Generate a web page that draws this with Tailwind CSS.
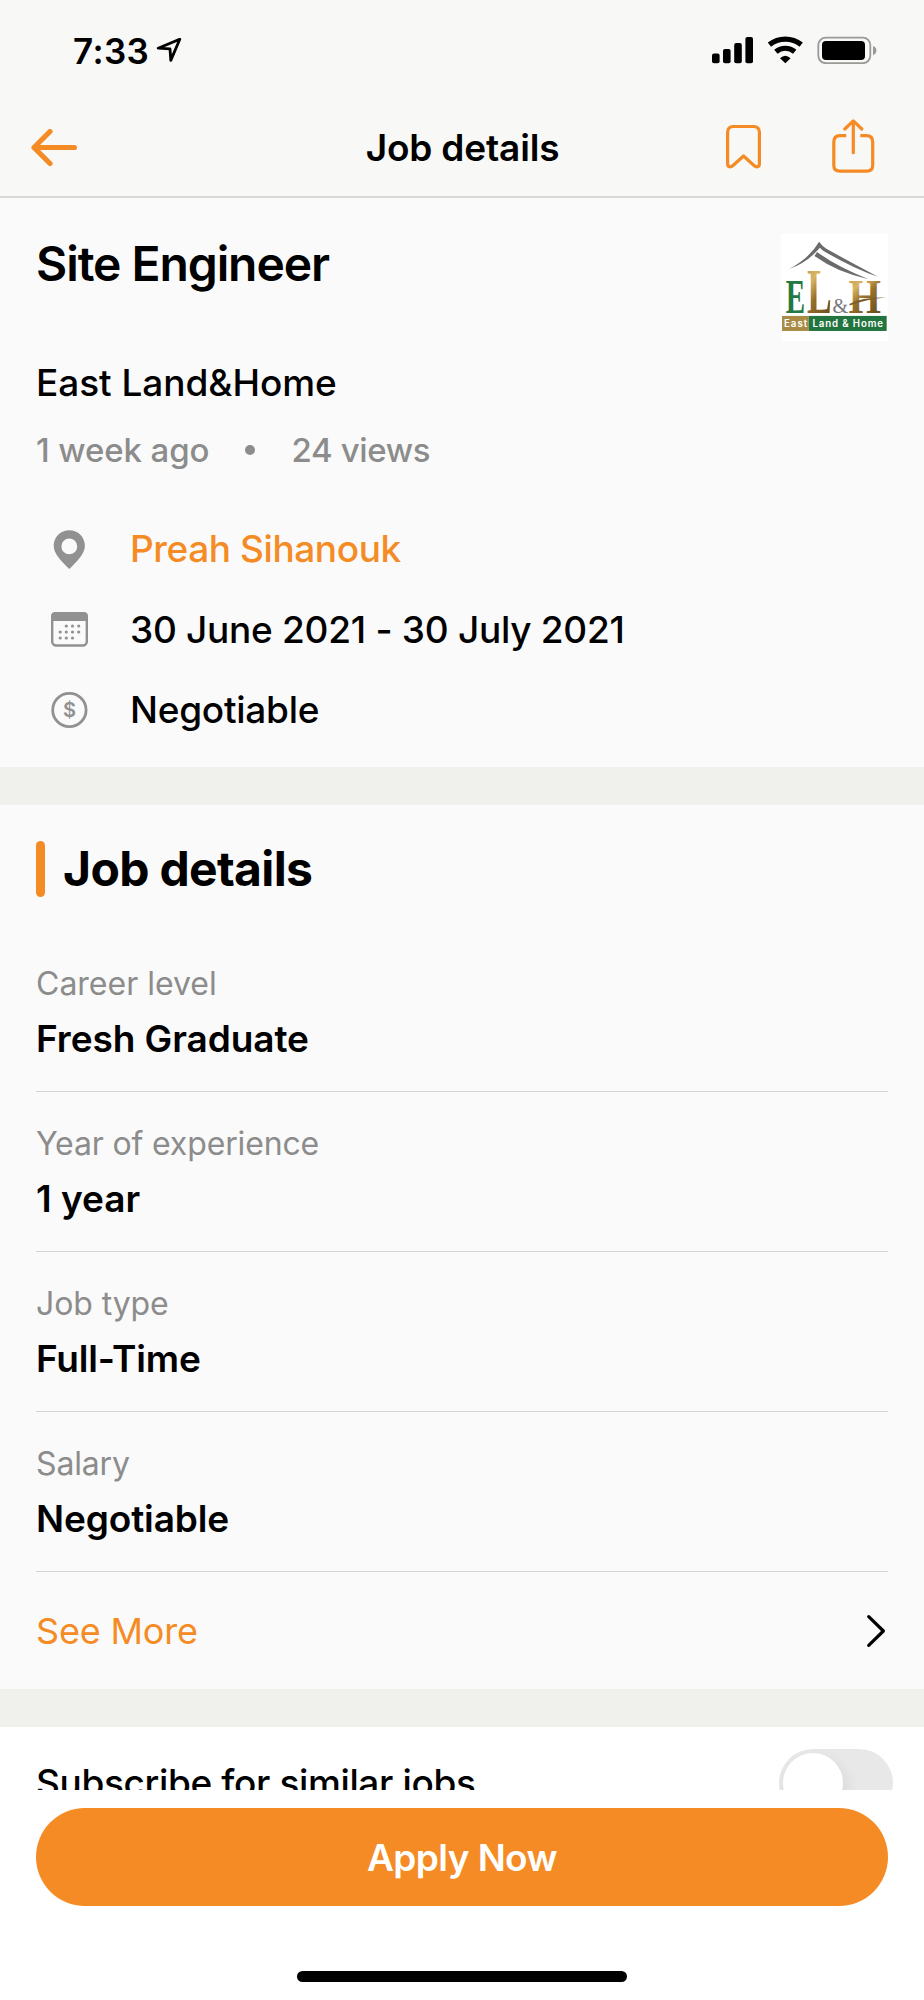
<!DOCTYPE html>
<html lang="en">
<head>
<meta charset="utf-8">
<title>Job details</title>
<script src="https://cdn.jsdelivr.net/npm/@tailwindcss/browser@4"></script>
</head>
<body class="bg-white">
<div class="flex h-[2000px] w-[924px] flex-col overflow-hidden bg-white font-[Inter,sans-serif] text-black">

  <!-- Status bar and navigation -->
  <header class="h-[198px] shrink-0 border-b-2 border-[#d8d8d4] bg-[#f8f8f6]">
    <div class="flex h-[100px] items-center justify-between pl-[73px] pr-[47px]">
      <div class="flex items-center gap-[7px] pt-[2px]">
        <span class="text-[35px] leading-10 font-semibold tracking-[0.4px]">7:33</span>
        <svg class="h-[26px] w-[26px]" viewBox="0 1 26 26" fill="none" stroke="#000" stroke-width="2.8" stroke-linejoin="round"><path d="M23.8 2.2 L2.2 11.2 L14 11.8 L14.8 23.4 Z"/></svg>
      </div>
      <svg class="h-7 w-[165px]" viewBox="712 36 165 28" fill="none">
        <g fill="#000">
          <rect x="712" y="53.6" width="7.6" height="9.6" rx="2"/>
          <rect x="723" y="49" width="7.6" height="14.2" rx="2"/>
          <rect x="734.2" y="43" width="7.6" height="20.2" rx="2"/>
          <rect x="745.4" y="37" width="7.6" height="26.2" rx="2"/>
          <path d="M780 58.2 Q785.3 53.2 790.6 58.2 L785.3 63.3 Z"/>
          <rect x="822" y="41" width="43" height="19" rx="4"/>
        </g>
        <path d="M769.4 44.6 A25.5 25.5 0 0 1 801.2 44.6 M775.9 51.7 A14.5 14.5 0 0 1 794.7 51.7" stroke="#000" stroke-width="5.2"/>
        <rect x="818.3" y="37.6" width="52" height="25.6" rx="7.5" stroke="#999997" stroke-width="1.8"/>
        <path d="M873 46 Q876.4 47.2 876.4 50.6 Q876.4 54 873 55.2 Z" fill="#999997"/>
      </svg>
    </div>
    <nav class="grid h-[95px] grid-cols-[1fr_auto_1fr] items-center pl-[31px] pr-[49px]">
      <svg class="h-[38px] w-[46px]" viewBox="0 0.5 46 38" fill="none" stroke="#f58b24" stroke-width="5.2" stroke-linecap="round" stroke-linejoin="round"><path d="M19 3 L3 19 L19 35 M3.5 19 H43.4"/></svg>
      <h1 class="pl-[19px] text-[37px] leading-[44px] font-semibold tracking-[-0.17px]">Job details</h1>
      <div class="flex items-center justify-end gap-[71px] pb-1">
        <svg class="h-[54px] w-[35px]" viewBox="726 119 35 54" fill="none" stroke="#f58b24" stroke-width="3.2" stroke-linejoin="round"><path d="M727.6 132.5 Q727.6 126.5 733.5 126.5 H753.5 Q759.4 126.5 759.4 132.5 V163.5 Q759.4 166.8 757 166.8 Q755.5 166.8 754 165.5 L743.5 156 L733 165.5 Q731.5 166.8 730 166.8 Q727.6 166.8 727.6 163.5 Z"/></svg>
        <svg class="h-[54px] w-[43px]" viewBox="832 119 43 54" fill="none" stroke="#f58b24" stroke-width="3.2"><path d="M846.3 135.7 H840 Q833.8 135.7 833.8 142 V165.2 Q833.8 171.2 840 171.2 H866.5 Q872.7 171.2 872.7 165.2 V142 Q872.7 135.7 866.5 135.7 H860.3"/><path d="M853.3 152.7 V121.3 M844.8 129 L853.3 120.9 L861.8 129" stroke-linecap="round" stroke-linejoin="round"/></svg>
      </div>
    </nav>
  </header>

  <!-- Job summary -->
  <section class="flex h-[569px] shrink-0 items-start justify-between bg-[#fafafa] px-9">
    <div class="pt-[38px]">
      <h2 class="text-[48px] leading-[56px] font-semibold tracking-[-1.07px]">Site Engineer</h2>
      <p class="mt-[69px] text-[37px] leading-[44px] font-medium tracking-[-0.05px]">East Land&amp;Home</p>
      <div class="mt-[25px] flex items-center text-[33px] leading-10 font-medium text-[#8c8c8c]">
        <span class="tracking-[-0.1px]">1 week ago</span>
        <span class="mr-[36px] ml-[36px] size-[10px] rounded-full bg-[#8c8c8c]"></span>
        <span class="tracking-[-0.35px]">24 views</span>
      </div>
      <ul class="mt-[57px] flex flex-col gap-[36.5px] text-[37px] leading-[44px] font-medium">
        <li class="flex items-center">
          <svg class="mr-[33px] ml-[5px] h-[39px] w-[56px]" viewBox="41 530 56 39" fill="#919191" fill-rule="evenodd"><path transform="translate(0 .5)" d="M69.3 529.7 C78 529.7 84.9 536.4 84.9 545.3 C84.9 553.5 77 561 69.3 568.5 C61.6 561 53.7 553.5 53.7 545.3 C53.7 536.4 60.6 529.7 69.3 529.7 Z M69.3 538 A7.9 7.9 0 1 0 69.3 553.8 A7.9 7.9 0 1 0 69.3 538 Z"/></svg>
          <span class="tracking-[-0.42px] text-[#f58b24]">Preah Sihanouk</span>
        </li>
        <li class="flex items-center">
          <svg class="mr-[33px] ml-[5px] h-[36px] w-[56px]" viewBox="41 611.5 56 36" fill="none">
            <rect x="52.2" y="612.8" width="34.6" height="32.2" rx="4" stroke="#919191" stroke-width="2.4"/>
            <path d="M51 620.5 V616 Q51 611.6 55.4 611.6 H83.6 Q88 611.6 88 616 V620.5 Z" fill="#919191"/>
            <g fill="#919191"><circle cx="66.3" cy="625.5" r="1.6"/><circle cx="72.5" cy="625.5" r="1.6"/><circle cx="78.7" cy="625.5" r="1.6"/><circle cx="60.2" cy="631.5" r="1.6"/><circle cx="66.3" cy="631.5" r="1.6"/><circle cx="72.5" cy="631.5" r="1.6"/><circle cx="78.7" cy="631.5" r="1.6"/><circle cx="60.2" cy="637.5" r="1.6"/><circle cx="66.3" cy="637.5" r="1.6"/><circle cx="72.5" cy="637.5" r="1.6"/></g>
          </svg>
          <span class="tracking-[-0.28px]">30 June 2021 - 30 July 2021</span>
        </li>
        <li class="flex items-center">
          <svg class="mr-[33px] ml-[5px] h-[38px] w-[56px]" viewBox="41 691 56 38" fill="none"><circle cx="69.4" cy="710" r="16.7" stroke="#919191" stroke-width="2.8"/><text x="69.4" y="717.2" text-anchor="middle" font-family="Inter, sans-serif" font-size="20" font-weight="600" fill="#919191">$</text></svg>
          <span class="tracking-[-0.27px]">Negotiable</span>
        </li>
      </ul>
    </div>
    <svg class="mt-[36px] h-[107px] w-[107px] bg-white" viewBox="10 12 320 320">
      <defs>
        <linearGradient id="gold" x1="0" y1="0" x2="0.5" y2="1"><stop offset="0" stop-color="#b8924a"/><stop offset="0.35" stop-color="#d9b565"/><stop offset="0.6" stop-color="#96702a"/><stop offset="1" stop-color="#6e5020"/></linearGradient>
      </defs>
      <g fill="#6b6b6e">
        <path d="M33 117 Q92 88 124 35 Q137 53 158 63 Q225 100 300 140 Q228 116 136 62 L126 53 Q88 99 33 117 Z"/>
        <path d="M118 66 Q178 110 272 147 Q180 128 110 78 Z"/>
      </g>
      <g font-family="Liberation Serif, serif" font-weight="700">
        <text x="24" y="248" font-size="146" textLength="58" lengthAdjust="spacingAndGlyphs" fill="#23793f">E</text>
        <text x="88" y="248" font-size="187" textLength="74" lengthAdjust="spacingAndGlyphs" fill="url(#gold)">L</text>
        <text x="212" y="248" font-size="145" textLength="97" lengthAdjust="spacingAndGlyphs" fill="url(#gold)">H</text>
      </g>
      <text x="164" y="248" font-family="Liberation Serif, serif" font-size="64" textLength="47" lengthAdjust="spacingAndGlyphs" fill="#77777a">&amp;</text>
      <path d="M214 221 Q255 200 322 202 Q262 208 216 226 Z" fill="#7d5c28"/>
      <rect x="13" y="257" width="80" height="45" fill="#a98b45"/>
      <rect x="93" y="257" width="233" height="45" fill="#23753f"/>
      <g font-family="Inter, sans-serif" font-size="29" font-weight="600" fill="#fff">
        <text x="19" y="290" textLength="69">East</text>
        <text x="104" y="290" textLength="211">Land &amp; Home</text>
      </g>
    </svg>
  </section>

  <div class="h-[38px] shrink-0 bg-[#f0f1ec]"></div>

  <!-- Job attributes -->
  <section class="h-[884px] shrink-0 bg-[#fafafa] px-9 pt-9">
    <div class="flex items-center gap-[18px]">
      <span class="h-14 w-[9px] rounded-full bg-[#f58b24]"></span>
      <h2 class="text-[48px] leading-[56px] font-bold tracking-[-0.67px]">Job details</h2>
    </div>
    <dl class="mt-[35px]">
      <div class="h-40 border-b border-[#d3d4d3] pt-8">
        <dt class="text-[32px] leading-10 text-[#8c8c8c]">Career level</dt>
        <dd class="mt-[13px] text-[37px] leading-[44px] font-semibold tracking-[-0.07px]">Fresh Graduate</dd>
      </div>
      <div class="h-40 border-b border-[#d3d4d3] pt-8">
        <dt class="text-[32px] leading-10 tracking-[-0.15px] text-[#8c8c8c]">Year of experience</dt>
        <dd class="mt-[13px] text-[37px] leading-[44px] font-semibold">1 year</dd>
      </div>
      <div class="h-40 border-b border-[#d3d4d3] pt-8">
        <dt class="text-[32px] leading-10 tracking-[-0.1px] text-[#8c8c8c]">Job type</dt>
        <dd class="mt-[13px] text-[37px] leading-[44px] font-semibold tracking-[-0.17px]">Full-Time</dd>
      </div>
      <div class="h-40 border-b border-[#d3d4d3] pt-8">
        <dt class="text-[32px] leading-10 tracking-[-0.15px] text-[#8c8c8c]">Salary</dt>
        <dd class="mt-[13px] text-[37px] leading-[44px] font-semibold tracking-[-0.12px]">Negotiable</dd>
      </div>
    </dl>
    <a class="mt-[37px] flex items-center justify-between text-[36px] leading-[44px] tracking-[-0.18px] text-[#f58b24]">See More
      <svg class="mr-[2px] h-[34px] w-5" viewBox="0 0 20 34" fill="none" stroke="#000" stroke-width="3.2" stroke-linecap="round" stroke-linejoin="round"><path d="M2.7 2.6 L17.4 17 L2.7 31.4"/></svg>
    </a>
  </section>

  <div class="h-[38px] shrink-0 bg-[#f0f1ec]"></div>

  <!-- Subscription row, scrolled under the footer -->
  <section class="flex h-[63px] shrink-0 items-start justify-between overflow-hidden bg-white pr-[31px] pl-9">
    <p class="mt-[34px] text-[37px] leading-[44px] font-medium tracking-[-0.36px]">Subscribe for similar jobs</p>
    <span class="mt-[22px] h-[68px] w-[114px] shrink-0 overflow-hidden rounded-full bg-[#e8e8e8] p-1"><span class="block size-[60px] rounded-full bg-white shadow-[3px_6px_16px_rgba(0,0,0,0.08)]"></span></span>
  </section>

  <!-- Apply action -->
  <footer class="flex h-[210px] shrink-0 flex-col items-center bg-white px-9 pt-[18px]">
    <button class="h-[98px] w-full rounded-full bg-[#f58b24] pt-px text-[37px] leading-[44px] font-semibold tracking-[-0.6px] text-white">Apply Now</button>
    <div class="mt-[65px] h-[11px] w-[330px] rounded-full bg-black"></div>
  </footer>
</div>
</body>
</html>
